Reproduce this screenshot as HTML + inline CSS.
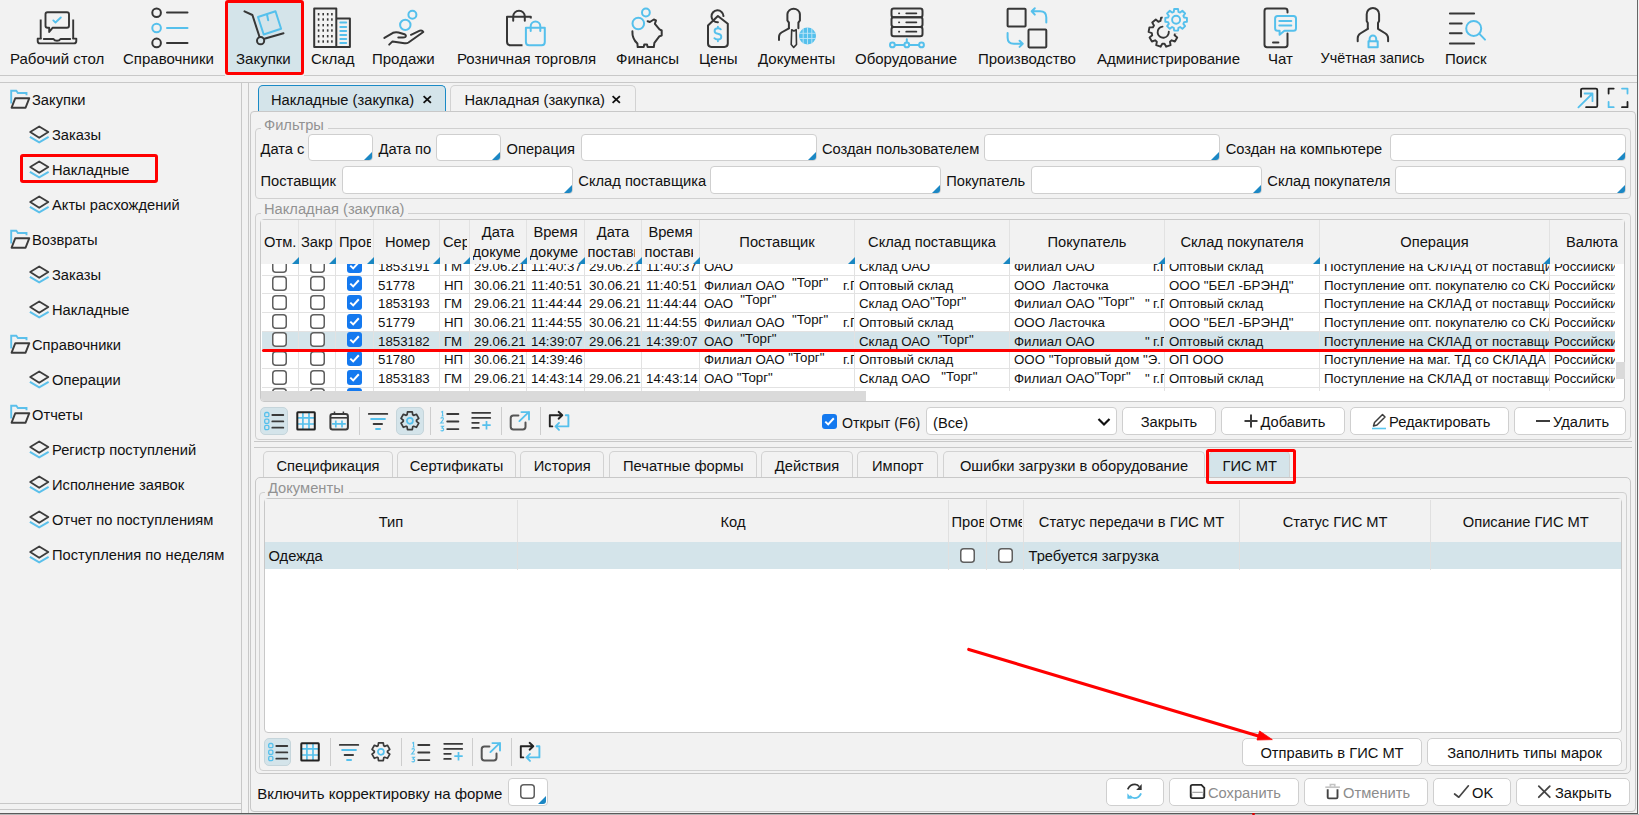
<!DOCTYPE html>
<html><head><meta charset="utf-8">
<style>
*{box-sizing:border-box}
html,body{margin:0;padding:0}
body{width:1639px;height:815px;background:#f2f2f2;position:relative;overflow:hidden;font-family:"Liberation Sans",sans-serif;font-size:14.7px;color:#111}
.a{position:absolute}
.t{position:absolute;white-space:pre;line-height:17px}
.hl{position:absolute;height:1px;background:#c8c8c8}
.vl{position:absolute;width:1px;background:#c8c8c8}
.ic{position:absolute;overflow:visible}
.g{color:#929292}
.cl{overflow:hidden}
</style></head><body>
<!-- TOOLBAR -->
<div class="a" style="left:225px;top:0;width:79px;height:75px;background:#d4e4ea;border:3px solid #f00;border-radius:3px"></div>
<div class="hl" style="left:0;top:75px;width:225px"></div>
<div class="hl" style="left:304px;top:75px;width:1333px"></div>
<div class="hl" style="left:0;top:82px;width:1637px"></div>
<div class="vl" style="left:1637px;top:0;height:814px;background:#666"></div>
<div class="hl" style="left:0;top:813px;width:1638px;background:#5a5a5a"></div>
<div class="hl" style="left:0;top:814px;width:1639px;background:#b8b8b8"></div><div class="a" style="left:1252px;top:812.5px;width:3px;height:2.5px;background:#d00;border-radius:1px"></div>

<div class="t" style="font-size:15px;left:10px;top:50px">Рабочий стол</div>
<div class="t" style="font-size:15px;left:123px;top:50px">Справочники</div>
<div class="t" style="font-size:15px;left:236px;top:50px">Закупки</div>
<div class="t" style="font-size:15px;left:311px;top:50px">Склад</div>
<div class="t" style="font-size:15px;left:372px;top:50px">Продажи</div>
<div class="t" style="font-size:15px;left:457px;top:50px">Розничная торговля</div>
<div class="t" style="font-size:15px;left:616px;top:50px">Финансы</div>
<div class="t" style="font-size:15px;left:699px;top:50px">Цены</div>
<div class="t" style="font-size:15px;left:758px;top:50px">Документы</div>
<div class="t" style="font-size:15px;left:855px;top:50px">Оборудование</div>
<div class="t" style="font-size:15px;left:978px;top:50px">Производство</div>
<div class="t" style="font-size:15px;left:1097px;top:50px">Администрирование</div>
<div class="t" style="font-size:15px;left:1268px;top:50px">Чат</div>
<div class="t" style="font-size:14.4px;left:1320.5px;top:50.4px">Учётная запись</div>
<div class="t" style="font-size:15px;left:1445px;top:50px">Поиск</div>


<svg class="ic" style="left:30px;top:4px" width="60" height="46" viewBox="0 0 60 46" fill="none" stroke-width="2" stroke-linecap="round" stroke-linejoin="round"><path d="M10.7 15.5V34.3M43.2 15.5V34.3" stroke="#363636" stroke-width="1.9" stroke-linecap="butt"/>
<path d="M8 34.6H11M43 34.6H46.3V37Q46.3 39.4 44 39.4H10Q7.7 39.4 7.7 37V34.6" stroke="#363636" stroke-width="1.9"/>
<path d="M13.8 35H23.5Q24.5 36.8 27 36.8Q29.5 36.8 30.5 35H40.2" stroke="#363636" stroke-width="1.9"/>
<path d="M17.5 8.3H37Q39 8.3 39 10.3V21.8Q39 23.8 37 23.8H22.5L19.2 28V23.8H17.5Q15.5 23.8 15.5 21.8V10.3Q15.5 8.3 17.5 8.3Z" stroke="#363636" stroke-width="1.9"/>
<path d="M23.3 16.4L25.5 18.5L30.8 13.5" stroke="#55c0ec" stroke-width="1.9"/></svg>
<svg class="ic" style="left:140px;top:4px" width="60" height="46" viewBox="0 0 60 46" fill="none" stroke-width="2" stroke-linecap="round" stroke-linejoin="round"><circle cx="16.6" cy="8.7" r="4.3" stroke="#363636"/><circle cx="16.6" cy="24" r="4.3" stroke="#55c0ec"/><circle cx="16.6" cy="38.9" r="4.3" stroke="#363636"/>
<path d="M27 8.6H47.5M27 38.9H47.5" stroke="#363636"/><path d="M27 24H47.5" stroke="#55c0ec"/></svg>
<svg class="ic" style="left:236px;top:4px" width="60" height="46" viewBox="0 0 60 46" fill="none" stroke-width="2" stroke-linecap="round" stroke-linejoin="round"><path d="M8.5 7.3L16.4 11L23.5 32.8" stroke="#363636"/><circle cx="24.6" cy="36.7" r="3.6" stroke="#363636"/><path d="M28.4 34.8L47.5 29.2" stroke="#363636"/>
<path d="M22 13L39.5 7.3L45.1 24.8L27.7 30.5Z" stroke="#55c0ec" stroke-linecap="butt"/><path d="M31 10.5L32.2 16.2" stroke="#55c0ec"/></svg>
<svg class="ic" style="left:302px;top:4px" width="60" height="46" viewBox="0 0 60 46" fill="none" stroke-width="2" stroke-linecap="round" stroke-linejoin="round"><path d="M12.2 4.6H34.3V43.1H12.2Z" stroke="#363636" stroke-linecap="butt"/><path d="M34.3 14.5H47.9V43.1H34.3" stroke="#363636" stroke-linecap="butt"/><rect x="15.8" y="9.0" width="1.6" height="2.4" fill="#363636" stroke="none"/><rect x="15.8" y="14.3" width="1.6" height="2.4" fill="#363636" stroke="none"/><rect x="15.8" y="20.0" width="1.6" height="2.4" fill="#363636" stroke="none"/><rect x="15.8" y="25.3" width="1.6" height="2.4" fill="#363636" stroke="none"/><rect x="15.8" y="31.000000000000004" width="1.6" height="2.4" fill="#363636" stroke="none"/><rect x="15.8" y="36.3" width="1.6" height="2.4" fill="#363636" stroke="none"/><rect x="20.4" y="9.0" width="1.6" height="2.4" fill="#363636" stroke="none"/><rect x="20.4" y="14.3" width="1.6" height="2.4" fill="#363636" stroke="none"/><rect x="20.4" y="20.0" width="1.6" height="2.4" fill="#363636" stroke="none"/><rect x="20.4" y="25.3" width="1.6" height="2.4" fill="#363636" stroke="none"/><rect x="20.4" y="31.000000000000004" width="1.6" height="2.4" fill="#363636" stroke="none"/><rect x="20.4" y="36.3" width="1.6" height="2.4" fill="#363636" stroke="none"/><rect x="24.9" y="9.0" width="1.6" height="2.4" fill="#363636" stroke="none"/><rect x="24.9" y="14.3" width="1.6" height="2.4" fill="#363636" stroke="none"/><rect x="24.9" y="20.0" width="1.6" height="2.4" fill="#363636" stroke="none"/><rect x="24.9" y="25.3" width="1.6" height="2.4" fill="#363636" stroke="none"/><rect x="24.9" y="31.000000000000004" width="1.6" height="2.4" fill="#363636" stroke="none"/><rect x="24.9" y="36.3" width="1.6" height="2.4" fill="#363636" stroke="none"/><rect x="29.099999999999998" y="9.0" width="1.6" height="2.4" fill="#363636" stroke="none"/><rect x="29.099999999999998" y="14.3" width="1.6" height="2.4" fill="#363636" stroke="none"/><rect x="29.099999999999998" y="20.0" width="1.6" height="2.4" fill="#363636" stroke="none"/><rect x="29.099999999999998" y="25.3" width="1.6" height="2.4" fill="#363636" stroke="none"/><rect x="29.099999999999998" y="31.000000000000004" width="1.6" height="2.4" fill="#363636" stroke="none"/><rect x="29.099999999999998" y="36.3" width="1.6" height="2.4" fill="#363636" stroke="none"/>
<path d="M38.3 18.6H44.2M38.3 22.9H44.2M38.3 27H44.2M38.3 30.9H44.2M38.3 35H44.2M38.3 38.9H44.2" stroke="#55c0ec"/></svg>
<svg class="ic" style="left:374px;top:4px" width="60" height="46" viewBox="0 0 60 46" fill="none" stroke-width="2" stroke-linecap="round" stroke-linejoin="round"><circle cx="31.3" cy="20.9" r="5.2" stroke="#55c0ec"/><circle cx="38.4" cy="10.7" r="4" stroke="#55c0ec"/>
<path d="M10.4 33.9L19 28.8Q21.5 27.8 24.5 28.5L30.5 30.2Q32.8 31.5 31.3 33Q30.5 33.6 29 33.6H24.3" stroke="#363636"/>
<path d="M37 30.8L45.8 26.6Q48.3 25.9 49.3 28L34.5 38.5Q33 39.5 30.5 39.2L18.5 37.4L15.2 40.6" stroke="#363636"/></svg>
<svg class="ic" style="left:496px;top:4px" width="60" height="46" viewBox="0 0 60 46" fill="none" stroke-width="2" stroke-linecap="round" stroke-linejoin="round"><path d="M26.5 41.2H14.5Q11 41.2 11 37.7V12.7H34.8V14.6" stroke="#363636" stroke-linecap="butt"/><path d="M17.2 16.8V12.5A5.8 5.8 0 0 1 28.8 12.5V16.8" stroke="#363636"/>
<path d="M29.9 23.7H48.8V38Q48.8 41.2 45.6 41.2H33.1Q29.9 41.2 29.9 38Z" stroke="#55c0ec" stroke-linecap="butt"/><path d="M34.7 27V22.3A4.8 4.8 0 0 1 44.3 22.3V27" stroke="#55c0ec"/></svg>
<svg class="ic" style="left:616px;top:4px" width="60" height="46" viewBox="0 0 60 46" fill="none" stroke-width="2" stroke-linecap="round" stroke-linejoin="round"><circle cx="22.3" cy="19.5" r="5.8" stroke="#55c0ec"/><circle cx="29.9" cy="8.5" r="3.9" stroke="#55c0ec"/>
<path d="M16.4 27.2Q16 34.5 21.4 39.5L21.7 43.1H27.7L28.2 40.6H31L31.6 43.1H37.8L38.4 38.9L43.5 32.2L45.7 31.6V26.5L43.5 25.4L38.9 19.8L40 16.4L37.8 15.5L33.9 18L31.6 17.2" stroke="#363636"/></svg>
<svg class="ic" style="left:688px;top:4px" width="60" height="46" viewBox="0 0 60 46" fill="none" stroke-width="2" stroke-linecap="round" stroke-linejoin="round"><path d="M20 21.5L29.9 12L39.8 19.8V39.5Q39.8 42.9 36.4 42.9H23.4Q20 42.9 20 39.5Z" stroke="#363636"/>
<path d="M35.5 12.1A6 6 0 1 0 29.9 18.3" stroke="#363636"/>
<path d="M32.8 25.3Q31.8 24.2 29.9 24.2Q26.6 24.2 26.6 27Q26.6 29.3 29.9 29.8Q33.3 30.3 33.3 32.7Q33.3 35.5 29.9 35.5Q27.5 35.5 26.4 34.2M29.9 22.6V24.2M29.9 35.5V37.2" stroke="#55c0ec" stroke-width="1.9"/></svg>
<svg class="ic" style="left:766px;top:4px" width="60" height="46" viewBox="0 0 60 46" fill="none" stroke-width="2" stroke-linecap="round" stroke-linejoin="round"><path d="M22.9 24.3V18.6L21.4 16.4V10.2A6.3 6.3 0 0 1 33.9 10.2V16.4L32.4 18.6V24.3" stroke="#363636"/><path d="M22.9 24.3L15.5 28.5Q13 30 13 33V36.1" stroke="#363636"/>
<path d="M25.7 25.7L27.9 27L30.2 25.7L30.5 40.5L27.7 43.4L25.2 40.5Z" stroke="#363636" stroke-width="1.6"/>
<circle cx="41.5" cy="31.9" r="8.5" fill="#55c0ec" stroke="none"/><path d="M33.5 29.3H49.5M33.5 34.5H49.5M37.2 24.5V39.5M41.5 23.5V40.5M45.8 24.5V39.5" stroke="#bfe6f7" stroke-width="0.9"/></svg>
<svg class="ic" style="left:878px;top:4px" width="60" height="46" viewBox="0 0 60 46" fill="none" stroke-width="2" stroke-linecap="round" stroke-linejoin="round"><rect x="13.5" y="4.6" width="31" height="8.7" rx="2.3" stroke="#363636"/><rect x="13.5" y="13.3" width="31" height="9.6" rx="2.3" stroke="#363636"/><rect x="13.5" y="22.9" width="31" height="9.3" rx="2.3" stroke="#363636"/>
<path d="M20.9 9.3H21.3M20.9 18.3H21.3M20.9 27.7H21.3M28.2 9.3H38.4M28.2 18.3H38.4M28.2 27.7H38.4" stroke="#363636" stroke-width="1.7"/>
<path d="M28.8 35.3V38.4M16.9 40.9H26.3M31.3 40.9H41" stroke="#55c0ec"/><circle cx="14.4" cy="40.9" r="2.4" stroke="#55c0ec"/><circle cx="28.8" cy="40.9" r="2.4" stroke="#55c0ec"/><circle cx="43.5" cy="40.9" r="2.4" stroke="#55c0ec"/></svg>
<svg class="ic" style="left:997px;top:4px" width="60" height="46" viewBox="0 0 60 46" fill="none" stroke-width="2" stroke-linecap="round" stroke-linejoin="round"><rect x="10.6" y="4.7" width="18" height="17.8" rx="0.8" stroke="#363636"/><rect x="31.5" y="25.6" width="17.8" height="17.8" rx="0.8" stroke="#363636"/>
<path d="M49.3 18.6V13.5Q49.3 7.3 43 7.3H34.9M37.8 4.3L34.7 7.3L37.8 10.6" stroke="#55c0ec"/>
<path d="M10.6 29.1V33.5Q10.6 39.8 16.9 39.8H25.5M22.6 36.7L25.7 39.8L22.6 42.9" stroke="#55c0ec"/></svg>
<svg class="ic" style="left:1138px;top:4px" width="60" height="46" viewBox="0 0 60 46" fill="none" stroke-width="2" stroke-linecap="round" stroke-linejoin="round"><defs><clipPath id="gc"><path d="M0 0H60V46H0Z M38.1 2.5A13.6 13.6 0 1 0 38.11 2.5Z" clip-rule="evenodd"/></clipPath></defs>
<path d="M22.52 16.96L23.08 13.58L27.72 13.58L28.28 16.96L30.41 17.74L33.02 15.51L36.57 18.49L34.83 21.45L35.96 23.41L39.39 23.38L40.20 27.94L36.97 29.09L36.57 31.32L39.22 33.50L36.90 37.51L33.69 36.32L31.95 37.77L32.58 41.14L28.22 42.73L26.53 39.74L24.27 39.74L22.58 42.73L18.22 41.14L18.85 37.77L17.11 36.32L13.90 37.51L11.58 33.50L14.23 31.32L13.83 29.09L10.60 27.94L11.41 23.38L14.84 23.41L15.97 21.45L14.23 18.49L17.78 15.51L20.39 17.74Z" stroke="#363636" stroke-width="1.9" clip-path="url(#gc)"/><path d="M30.8 27.7A5.6 5.6 0 1 1 24.5 22.6" stroke="#363636" stroke-width="1.9"/>
<path d="M35.78 7.83L36.17 4.97L40.03 4.97L40.42 7.83L42.10 8.53L44.39 6.78L47.12 9.51L45.37 11.80L46.07 13.48L48.93 13.87L48.93 17.73L46.07 18.12L45.37 19.80L47.12 22.09L44.39 24.82L42.10 23.07L40.42 23.77L40.03 26.63L36.17 26.63L35.78 23.77L34.10 23.07L31.81 24.82L29.08 22.09L30.83 19.80L30.13 18.12L27.27 17.73L27.27 13.87L30.13 13.48L30.83 11.80L29.08 9.51L31.81 6.78L34.10 8.53Z" stroke="#55c0ec" stroke-width="1.9"/><circle cx="38.1" cy="15.8" r="4" stroke="#55c0ec" stroke-width="1.9"/></svg>
<svg class="ic" style="left:1250px;top:4px" width="60" height="46" viewBox="0 0 60 46" fill="none" stroke-width="2" stroke-linecap="round" stroke-linejoin="round"><path d="M37.5 8.5V7Q37.5 4.6 35 4.6H17Q14.5 4.6 14.5 7V40.8Q14.5 43.2 17 43.2H35Q37.5 43.2 37.5 40.8V29.5" stroke="#363636"/><path d="M23 38.4H28.4" stroke="#363636"/>
<path d="M27.6 11.9H43.5Q46 11.9 46 14.4V24.3Q46 26.8 43.5 26.8H34.4L29.6 30.8V26.8H27.6Q25.1 26.8 25.1 24.3V14.4Q25.1 11.9 27.6 11.9Z" stroke="#55c0ec"/>
<path d="M29.3 16.9H41.3M29.3 21.4H41.3" stroke="#55c0ec"/></svg>
<svg class="ic" style="left:1343px;top:4px" width="60" height="46" viewBox="0 0 60 46" fill="none" stroke-width="2" stroke-linecap="round" stroke-linejoin="round"><path d="M24.8 24.8V18.9L23.7 16.9V10.2A6.2 6.2 0 0 1 36.1 10.2V16.9L35 18.9V24.8L42.5 29.5Q45.1 31.2 45.1 34.2V37.2" stroke="#363636"/><path d="M24.8 24.8L17.3 29.5Q14.7 31.2 14.7 34.2V37.2" stroke="#363636"/>
<rect x="25.5" y="37.3" width="9.2" height="5.9" stroke="#55c0ec" stroke-linecap="butt"/><path d="M26.6 37.2V34.8A3.3 3.3 0 0 1 33.2 34.8V37.2" stroke="#55c0ec"/></svg>
<svg class="ic" style="left:1437px;top:4px" width="60" height="46" viewBox="0 0 60 46" fill="none" stroke-width="2" stroke-linecap="round" stroke-linejoin="round"><path d="M12.9 9.6H37.1M12.9 39.5H37.1M12.9 19.5H24.7M12.9 29.3H24.7" stroke="#363636"/>
<circle cx="36.7" cy="24.4" r="7.5" stroke="#55c0ec"/><path d="M42.2 29.6L48 35.6" stroke="#55c0ec"/></svg>
<!-- LEFT PANEL -->
<div class="vl" style="left:241px;top:83px;height:730px"></div>
<div class="vl" style="left:248px;top:83px;height:730px"></div>
<div class="hl" style="left:0;top:803px;width:241px"></div>
<div class="hl" style="left:0;top:809px;width:241px"></div>
<div class="a" style="left:20px;top:154px;width:138px;height:29px;border:3px solid #f00;border-radius:3px"></div>

<svg class="ic" style="left:10px;top:89px" width="22" height="21" viewBox="0 0 22 21"><path d="M1.2 14.5V1.8H6.3L7.9 4H16.5V6.2" fill="none" stroke="#5bc0eb" stroke-width="1.9"/><path d="M5.3 9.2H19.3L15.6 18.7H1.6Z" fill="none" stroke="#3c3c3c" stroke-width="1.9" stroke-linejoin="round"/></svg>
<div class="t" style="left:32px;top:91.5px">Закупки</div>
<svg class="ic" style="left:29px;top:125px" width="22" height="19" viewBox="0 0 22 19"><path d="M1.2 7L10.2 1.5L19.3 7L10.2 12.8Z" fill="none" stroke="#3c3c3c" stroke-width="1.8" stroke-linejoin="round"/><path d="M0.9 11.9L10.2 17.3L19.6 11.9" fill="none" stroke="#5bc0eb" stroke-width="2"/></svg>
<div class="t" style="left:52px;top:126.5px">Заказы</div>
<svg class="ic" style="left:29px;top:160px" width="22" height="19" viewBox="0 0 22 19"><path d="M1.2 7L10.2 1.5L19.3 7L10.2 12.8Z" fill="none" stroke="#3c3c3c" stroke-width="1.8" stroke-linejoin="round"/><path d="M0.9 11.9L10.2 17.3L19.6 11.9" fill="none" stroke="#5bc0eb" stroke-width="2"/></svg>
<div class="t" style="left:52px;top:161.5px">Накладные</div>
<svg class="ic" style="left:29px;top:195px" width="22" height="19" viewBox="0 0 22 19"><path d="M1.2 7L10.2 1.5L19.3 7L10.2 12.8Z" fill="none" stroke="#3c3c3c" stroke-width="1.8" stroke-linejoin="round"/><path d="M0.9 11.9L10.2 17.3L19.6 11.9" fill="none" stroke="#5bc0eb" stroke-width="2"/></svg>
<div class="t" style="left:52px;top:196.5px">Акты расхождений</div>
<svg class="ic" style="left:10px;top:229px" width="22" height="21" viewBox="0 0 22 21"><path d="M1.2 14.5V1.8H6.3L7.9 4H16.5V6.2" fill="none" stroke="#5bc0eb" stroke-width="1.9"/><path d="M5.3 9.2H19.3L15.6 18.7H1.6Z" fill="none" stroke="#3c3c3c" stroke-width="1.9" stroke-linejoin="round"/></svg>
<div class="t" style="left:32px;top:231.5px">Возвраты</div>
<svg class="ic" style="left:29px;top:265px" width="22" height="19" viewBox="0 0 22 19"><path d="M1.2 7L10.2 1.5L19.3 7L10.2 12.8Z" fill="none" stroke="#3c3c3c" stroke-width="1.8" stroke-linejoin="round"/><path d="M0.9 11.9L10.2 17.3L19.6 11.9" fill="none" stroke="#5bc0eb" stroke-width="2"/></svg>
<div class="t" style="left:52px;top:266.5px">Заказы</div>
<svg class="ic" style="left:29px;top:300px" width="22" height="19" viewBox="0 0 22 19"><path d="M1.2 7L10.2 1.5L19.3 7L10.2 12.8Z" fill="none" stroke="#3c3c3c" stroke-width="1.8" stroke-linejoin="round"/><path d="M0.9 11.9L10.2 17.3L19.6 11.9" fill="none" stroke="#5bc0eb" stroke-width="2"/></svg>
<div class="t" style="left:52px;top:301.5px">Накладные</div>
<svg class="ic" style="left:10px;top:334px" width="22" height="21" viewBox="0 0 22 21"><path d="M1.2 14.5V1.8H6.3L7.9 4H16.5V6.2" fill="none" stroke="#5bc0eb" stroke-width="1.9"/><path d="M5.3 9.2H19.3L15.6 18.7H1.6Z" fill="none" stroke="#3c3c3c" stroke-width="1.9" stroke-linejoin="round"/></svg>
<div class="t" style="left:32px;top:336.5px">Справочники</div>
<svg class="ic" style="left:29px;top:370px" width="22" height="19" viewBox="0 0 22 19"><path d="M1.2 7L10.2 1.5L19.3 7L10.2 12.8Z" fill="none" stroke="#3c3c3c" stroke-width="1.8" stroke-linejoin="round"/><path d="M0.9 11.9L10.2 17.3L19.6 11.9" fill="none" stroke="#5bc0eb" stroke-width="2"/></svg>
<div class="t" style="left:52px;top:371.5px">Операции</div>
<svg class="ic" style="left:10px;top:404px" width="22" height="21" viewBox="0 0 22 21"><path d="M1.2 14.5V1.8H6.3L7.9 4H16.5V6.2" fill="none" stroke="#5bc0eb" stroke-width="1.9"/><path d="M5.3 9.2H19.3L15.6 18.7H1.6Z" fill="none" stroke="#3c3c3c" stroke-width="1.9" stroke-linejoin="round"/></svg>
<div class="t" style="left:32px;top:406.5px">Отчеты</div>
<svg class="ic" style="left:29px;top:440px" width="22" height="19" viewBox="0 0 22 19"><path d="M1.2 7L10.2 1.5L19.3 7L10.2 12.8Z" fill="none" stroke="#3c3c3c" stroke-width="1.8" stroke-linejoin="round"/><path d="M0.9 11.9L10.2 17.3L19.6 11.9" fill="none" stroke="#5bc0eb" stroke-width="2"/></svg>
<div class="t" style="left:52px;top:441.5px">Регистр поступлений</div>
<svg class="ic" style="left:29px;top:475px" width="22" height="19" viewBox="0 0 22 19"><path d="M1.2 7L10.2 1.5L19.3 7L10.2 12.8Z" fill="none" stroke="#3c3c3c" stroke-width="1.8" stroke-linejoin="round"/><path d="M0.9 11.9L10.2 17.3L19.6 11.9" fill="none" stroke="#5bc0eb" stroke-width="2"/></svg>
<div class="t" style="left:52px;top:476.5px">Исполнение заявок</div>
<svg class="ic" style="left:29px;top:510px" width="22" height="19" viewBox="0 0 22 19"><path d="M1.2 7L10.2 1.5L19.3 7L10.2 12.8Z" fill="none" stroke="#3c3c3c" stroke-width="1.8" stroke-linejoin="round"/><path d="M0.9 11.9L10.2 17.3L19.6 11.9" fill="none" stroke="#5bc0eb" stroke-width="2"/></svg>
<div class="t" style="left:52px;top:511.5px">Отчет по поступлениям</div>
<svg class="ic" style="left:29px;top:545px" width="22" height="19" viewBox="0 0 22 19"><path d="M1.2 7L10.2 1.5L19.3 7L10.2 12.8Z" fill="none" stroke="#3c3c3c" stroke-width="1.8" stroke-linejoin="round"/><path d="M0.9 11.9L10.2 17.3L19.6 11.9" fill="none" stroke="#5bc0eb" stroke-width="2"/></svg>
<div class="t" style="left:52px;top:546.5px">Поступления по неделям</div>


<div class="a" style="left:258px;top:85px;width:188px;height:26.5px;background:#d4e4ea;border:1.5px solid #1a8ac6;border-bottom:none;border-radius:5px 5px 0 0"></div>
<div class="t " style="left:271px;top:91.7px;">Накладные (закупка)</div>
<svg class="ic" style="left:420px;top:93px" width="14" height="14" fill="none"><path d="M3.6 3.1L10.9 9.8M10.9 3.1L3.6 9.8" stroke="#111" stroke-width="1.8"/></svg>
<div class="a" style="left:450px;top:85px;width:186px;height:26px;border:1px solid #d2d2d2;border-bottom:none;border-radius:5px 5px 0 0"></div>
<div class="t " style="left:464.5px;top:91.7px;">Накладная (закупка)</div>
<svg class="ic" style="left:609px;top:93px" width="14" height="14" fill="none"><path d="M3.6 3.1L10.9 9.8M10.9 3.1L3.6 9.8" stroke="#111" stroke-width="1.8"/></svg>
<div class="a" style="left:250px;top:111px;width:1386px;height:701px;border:1px solid #c8c8c8;border-radius:4px"></div>
<svg class="ic" style="left:1572px;top:84px" width="60" height="28" viewBox="0 0 60 28" fill="none" stroke-width="1.8" stroke-linecap="round" stroke-linejoin="round"><path d="M9 12.8V6Q9 4.6 10.4 4.6H23.9Q25.3 4.6 25.3 6V21.8Q25.3 23.2 23.9 23.2H14.1" stroke="#222"/><path d="M6.4 23.4L20.5 9.5M12.6 9.5H20.5V17.2" stroke="#55c0ec"/><path d="M36.6 9.5V4.6H41.7M55.5 17.9V23.2H50" stroke="#222"/><path d="M50 4.6H55.5V9.5M36.6 17.9V23.2H41.7" stroke="#55c0ec"/></svg>
<div class="a" style="left:255px;top:128px;width:1376px;height:71px;border:1px solid #d0d0d0;border-radius:4px"></div>
<div class="a" style="left:261px;top:126px;width:67px;height:5px;background:#f2f2f2"></div>
<div class="t g" style="left:264px;top:116.6px;">Фильтры</div>
<div class="t " style="left:260.5px;top:140.9px;">Дата с</div>
<div class="a" style="left:308px;top:134px;width:65px;height:27px;background:#fff;border:1px solid #cfcfcf;border-radius:4px"></div>
<svg class="ic" style="left:364px;top:152px" width="8" height="8"><path d="M8 0V5Q8 8 5 8H0Z" fill="#1b87c4"/></svg>
<div class="t " style="left:378.5px;top:140.9px;">Дата по</div>
<div class="a" style="left:436px;top:134px;width:65px;height:27px;background:#fff;border:1px solid #cfcfcf;border-radius:4px"></div>
<svg class="ic" style="left:492px;top:152px" width="8" height="8"><path d="M8 0V5Q8 8 5 8H0Z" fill="#1b87c4"/></svg>
<div class="t " style="left:506.5px;top:140.9px;">Операция</div>
<div class="a" style="left:581px;top:134px;width:236px;height:27px;background:#fff;border:1px solid #cfcfcf;border-radius:4px"></div>
<svg class="ic" style="left:808px;top:152px" width="8" height="8"><path d="M8 0V5Q8 8 5 8H0Z" fill="#1b87c4"/></svg>
<div class="t " style="left:822px;top:140.9px;">Создан пользователем</div>
<div class="a" style="left:984px;top:134px;width:236px;height:27px;background:#fff;border:1px solid #cfcfcf;border-radius:4px"></div>
<svg class="ic" style="left:1211px;top:152px" width="8" height="8"><path d="M8 0V5Q8 8 5 8H0Z" fill="#1b87c4"/></svg>
<div class="t " style="left:1225.7px;top:140.9px;">Создан на компьютере</div>
<div class="a" style="left:1390px;top:134px;width:236px;height:27px;background:#fff;border:1px solid #cfcfcf;border-radius:4px"></div>
<svg class="ic" style="left:1617px;top:152px" width="8" height="8"><path d="M8 0V5Q8 8 5 8H0Z" fill="#1b87c4"/></svg>
<div class="t " style="left:260.5px;top:172.9px;">Поставщик</div>
<div class="a" style="left:342px;top:166px;width:231px;height:28px;background:#fff;border:1px solid #cfcfcf;border-radius:4px"></div>
<svg class="ic" style="left:564px;top:185px" width="8" height="8"><path d="M8 0V5Q8 8 5 8H0Z" fill="#1b87c4"/></svg>
<div class="t " style="left:578.3px;top:172.9px;">Склад поставщика</div>
<div class="a" style="left:710px;top:166px;width:231px;height:28px;background:#fff;border:1px solid #cfcfcf;border-radius:4px"></div>
<svg class="ic" style="left:932px;top:185px" width="8" height="8"><path d="M8 0V5Q8 8 5 8H0Z" fill="#1b87c4"/></svg>
<div class="t " style="left:946.2px;top:172.9px;">Покупатель</div>
<div class="a" style="left:1031px;top:166px;width:231px;height:28px;background:#fff;border:1px solid #cfcfcf;border-radius:4px"></div>
<svg class="ic" style="left:1253px;top:185px" width="8" height="8"><path d="M8 0V5Q8 8 5 8H0Z" fill="#1b87c4"/></svg>
<div class="t " style="left:1267.3px;top:172.9px;">Склад покупателя</div>
<div class="a" style="left:1395px;top:166px;width:231px;height:28px;background:#fff;border:1px solid #cfcfcf;border-radius:4px"></div>
<svg class="ic" style="left:1617px;top:185px" width="8" height="8"><path d="M8 0V5Q8 8 5 8H0Z" fill="#1b87c4"/></svg>
<div class="a" style="left:255px;top:213px;width:1376px;height:227px;border:1px solid #d0d0d0;border-radius:4px"></div>
<div class="a" style="left:261px;top:211px;width:147px;height:5px;background:#f2f2f2"></div>
<div class="t g" style="left:264px;top:200.9px;">Накладная (закупка)</div>
<div class="a" style="left:260px;top:219px;width:1365px;height:183px;background:#fff;border:1px solid #c8c8c8;border-radius:4px;overflow:hidden"></div>
<div class="a" style="left:261px;top:220px;width:1363px;height:43.5px;background:#f2f2f2"></div>
<div class="a" style="left:261.5px;top:331px;width:1353.5px;height:19px;background:#d4e4ea"></div>
<div class="vl" style="left:298px;top:220px;height:171px;background:#e2e2e2"></div>
<div class="vl" style="left:335px;top:220px;height:171px;background:#e2e2e2"></div>
<div class="vl" style="left:373px;top:220px;height:171px;background:#e2e2e2"></div>
<div class="vl" style="left:439px;top:220px;height:171px;background:#e2e2e2"></div>
<div class="vl" style="left:469px;top:220px;height:171px;background:#e2e2e2"></div>
<div class="vl" style="left:526px;top:220px;height:171px;background:#e2e2e2"></div>
<div class="vl" style="left:584px;top:220px;height:171px;background:#e2e2e2"></div>
<div class="vl" style="left:641px;top:220px;height:171px;background:#e2e2e2"></div>
<div class="vl" style="left:699px;top:220px;height:171px;background:#e2e2e2"></div>
<div class="vl" style="left:854px;top:220px;height:171px;background:#e2e2e2"></div>
<div class="vl" style="left:1009px;top:220px;height:171px;background:#e2e2e2"></div>
<div class="vl" style="left:1164px;top:220px;height:171px;background:#e2e2e2"></div>
<div class="vl" style="left:1319px;top:220px;height:171px;background:#e2e2e2"></div>
<div class="vl" style="left:1549px;top:220px;height:171px;background:#e2e2e2"></div>
<div class="hl" style="left:261.5px;top:275px;width:1353.5px;background:#e2e2e2"></div>
<div class="hl" style="left:261.5px;top:293px;width:1353.5px;background:#e2e2e2"></div>
<div class="hl" style="left:261.5px;top:312px;width:1353.5px;background:#e2e2e2"></div>
<div class="hl" style="left:261.5px;top:331px;width:1353.5px;background:#e2e2e2"></div>
<div class="hl" style="left:261.5px;top:349px;width:1353.5px;background:#e2e2e2"></div>
<div class="hl" style="left:261.5px;top:368px;width:1353.5px;background:#e2e2e2"></div>
<div class="hl" style="left:261.5px;top:387px;width:1353.5px;background:#e2e2e2"></div>
<svg class="ic" style="left:291.5px;top:256.5px" width="7" height="7"><path d="M7 0V7H0Z" fill="#1a87c2"/></svg>
<svg class="ic" style="left:328.5px;top:256.5px" width="7" height="7"><path d="M7 0V7H0Z" fill="#1a87c2"/></svg>
<svg class="ic" style="left:366.5px;top:256.5px" width="7" height="7"><path d="M7 0V7H0Z" fill="#1a87c2"/></svg>
<svg class="ic" style="left:432.5px;top:256.5px" width="7" height="7"><path d="M7 0V7H0Z" fill="#1a87c2"/></svg>
<svg class="ic" style="left:462.5px;top:256.5px" width="7" height="7"><path d="M7 0V7H0Z" fill="#1a87c2"/></svg>
<svg class="ic" style="left:519.5px;top:256.5px" width="7" height="7"><path d="M7 0V7H0Z" fill="#1a87c2"/></svg>
<svg class="ic" style="left:577.5px;top:256.5px" width="7" height="7"><path d="M7 0V7H0Z" fill="#1a87c2"/></svg>
<svg class="ic" style="left:634.5px;top:256.5px" width="7" height="7"><path d="M7 0V7H0Z" fill="#1a87c2"/></svg>
<svg class="ic" style="left:692.5px;top:256.5px" width="7" height="7"><path d="M7 0V7H0Z" fill="#1a87c2"/></svg>
<svg class="ic" style="left:847.5px;top:256.5px" width="7" height="7"><path d="M7 0V7H0Z" fill="#1a87c2"/></svg>
<svg class="ic" style="left:1002.5px;top:256.5px" width="7" height="7"><path d="M7 0V7H0Z" fill="#1a87c2"/></svg>
<svg class="ic" style="left:1157.5px;top:256.5px" width="7" height="7"><path d="M7 0V7H0Z" fill="#1a87c2"/></svg>
<svg class="ic" style="left:1312.5px;top:256.5px" width="7" height="7"><path d="M7 0V7H0Z" fill="#1a87c2"/></svg>
<svg class="ic" style="left:1542.5px;top:256.5px" width="7" height="7"><path d="M7 0V7H0Z" fill="#1a87c2"/></svg>
<div class="t cl" style="left:264px;width:33px;top:233.9px;text-align:left">Отм.</div>
<div class="t cl" style="left:301px;width:33.5px;top:233.9px;text-align:left">Закр</div>
<div class="t cl" style="left:339px;width:32px;top:233.9px">Пров</div>
<div class="t cl" style="left:376.5px;width:62.0px;top:233.9px;text-align:center">Номер</div>
<div class="t cl" style="left:443px;width:24px;top:233.9px">Серия</div>
<div class="t" style="left:469.5px;width:57.0px;text-align:center;top:223.7px;">Дата</div>
<div class="t cl" style="left:472.5px;width:47.0px;top:243.7px">документа</div>
<div class="t" style="left:526.5px;width:58.0px;text-align:center;top:223.7px;">Время</div>
<div class="t cl" style="left:529.5px;width:48.0px;top:243.7px">документа</div>
<div class="t" style="left:584.5px;width:57.0px;text-align:center;top:223.7px;">Дата</div>
<div class="t cl" style="left:587.5px;width:47.0px;top:243.7px">поставки</div>
<div class="t" style="left:641.5px;width:58.0px;text-align:center;top:223.7px;">Время</div>
<div class="t cl" style="left:644.5px;width:48.0px;top:243.7px">поставки</div>
<div class="t" style="left:699.5px;width:155.0px;text-align:center;top:233.9px;">Поставщик</div>
<div class="t" style="left:854.5px;width:155.0px;text-align:center;top:233.9px;">Склад поставщика</div>
<div class="t" style="left:1009.5px;width:155.0px;text-align:center;top:233.9px;">Покупатель</div>
<div class="t" style="left:1164.5px;width:155.0px;text-align:center;top:233.9px;">Склад покупателя</div>
<div class="t" style="left:1319.5px;width:230.0px;text-align:center;top:233.9px;">Операция</div>
<div class="t " style="left:1566px;top:233.9px;">Валюта</div>
<div class="a" style="left:261.5px;top:263.5px;width:1353.5px;height:127.5px;overflow:hidden">
<svg class="ic" style="left:10.5px;top:-5.670000000000016px" width="15" height="15" viewBox="0 0 15 15"><rect x="0.75" y="0.75" width="13.5" height="13.5" rx="3" fill="#fff" stroke="#5f5f5f" stroke-width="1.5"/></svg>
<svg class="ic" style="left:48.5px;top:-5.670000000000016px" width="15" height="15" viewBox="0 0 15 15"><rect x="0.75" y="0.75" width="13.5" height="13.5" rx="3" fill="#fff" stroke="#5f5f5f" stroke-width="1.5"/></svg>
<svg class="ic" style="left:85.5px;top:-5.670000000000016px" width="15" height="15" viewBox="0 0 15 15"><rect x="0" y="0" width="15" height="15" rx="3" fill="#1479ef"/><path d="M3.3 7.6L6.2 10.4L11.8 4.3" fill="none" stroke="#fff" stroke-width="2"/></svg>
<div class="t cl" style="left:116.5px;width:61.0px;top:-5.6px;font-size:13.3px">1853191</div>
<div class="t cl" style="left:182.5px;width:25.0px;top:-5.6px;font-size:13.3px">ГМ</div>
<div class="t cl" style="left:212.5px;width:52.0px;top:-5.6px;font-size:13.3px">29.06.21</div>
<div class="t cl" style="left:269.5px;width:53.0px;top:-5.6px;font-size:13.3px">11:40:37</div>
<div class="t cl" style="left:327.5px;width:52.0px;top:-5.6px;font-size:13.3px">29.06.21</div>
<div class="t cl" style="left:384.5px;width:53.0px;top:-5.6px;font-size:13.3px">11:40:37</div>
<div class="t cl" style="left:442.5px;width:150.0px;top:-5.6px;font-size:13.3px">ОАО</div>
<div class="t cl" style="left:597.5px;width:150.0px;top:-5.6px;font-size:13.3px">Склад ОАО</div>
<div class="t cl" style="left:752.5px;width:150.0px;top:-5.6px;font-size:13.3px">Филиал ОАО</div>
<div class="t cl" style="left:907.5px;width:150.0px;top:-5.6px;font-size:13.3px">Оптовый склад</div>
<div class="t cl" style="left:1062.5px;width:225.0px;top:-5.6px;font-size:13.3px">Поступление на СКЛАД от поставщика</div>
<div class="t cl" style="left:1292.5px;width:60.5px;top:-5.6px;font-size:13.3px">Российский рубль</div>
<div class="t" style="left:891.5px;top:-5.6px;width:11px;overflow:hidden;font-size:13.3px">г.Г</div>
<svg class="ic" style="left:10.5px;top:12.996999999999957px" width="15" height="15" viewBox="0 0 15 15"><rect x="0.75" y="0.75" width="13.5" height="13.5" rx="3" fill="#fff" stroke="#5f5f5f" stroke-width="1.5"/></svg>
<svg class="ic" style="left:48.5px;top:12.996999999999957px" width="15" height="15" viewBox="0 0 15 15"><rect x="0.75" y="0.75" width="13.5" height="13.5" rx="3" fill="#fff" stroke="#5f5f5f" stroke-width="1.5"/></svg>
<svg class="ic" style="left:85.5px;top:12.996999999999957px" width="15" height="15" viewBox="0 0 15 15"><rect x="0" y="0" width="15" height="15" rx="3" fill="#1479ef"/><path d="M3.3 7.6L6.2 10.4L11.8 4.3" fill="none" stroke="#fff" stroke-width="2"/></svg>
<div class="t cl" style="left:116.5px;width:61.0px;top:13.1px;font-size:13.3px">51778</div>
<div class="t cl" style="left:182.5px;width:25.0px;top:13.1px;font-size:13.3px">НП</div>
<div class="t cl" style="left:212.5px;width:52.0px;top:13.1px;font-size:13.3px">30.06.21</div>
<div class="t cl" style="left:269.5px;width:53.0px;top:13.1px;font-size:13.3px">11:40:51</div>
<div class="t cl" style="left:327.5px;width:52.0px;top:13.1px;font-size:13.3px">30.06.21</div>
<div class="t cl" style="left:384.5px;width:53.0px;top:13.1px;font-size:13.3px">11:40:51</div>
<div class="t cl" style="left:442.5px;width:150.0px;top:13.1px;font-size:13.3px">Филиал ОАО  <span style="position:relative;top:-3px">"Торг"</span></div>
<div class="t cl" style="left:597.5px;width:150.0px;top:13.1px;font-size:13.3px">Оптовый склад</div>
<div class="t cl" style="left:752.5px;width:150.0px;top:13.1px;font-size:13.3px">ООО  Ласточка</div>
<div class="t cl" style="left:907.5px;width:150.0px;top:13.1px;font-size:13.3px">ООО "БЕЛ -БРЭНД"</div>
<div class="t cl" style="left:1062.5px;width:225.0px;top:13.1px;font-size:13.3px">Поступление опт. покупателю со СКЛАДА</div>
<div class="t cl" style="left:1292.5px;width:60.5px;top:13.1px;font-size:13.3px">Российский рубль</div>
<div class="t" style="left:581.5px;top:13.1px;width:11px;overflow:hidden;font-size:13.3px">г.Г</div>
<svg class="ic" style="left:10.5px;top:31.663999999999987px" width="15" height="15" viewBox="0 0 15 15"><rect x="0.75" y="0.75" width="13.5" height="13.5" rx="3" fill="#fff" stroke="#5f5f5f" stroke-width="1.5"/></svg>
<svg class="ic" style="left:48.5px;top:31.663999999999987px" width="15" height="15" viewBox="0 0 15 15"><rect x="0.75" y="0.75" width="13.5" height="13.5" rx="3" fill="#fff" stroke="#5f5f5f" stroke-width="1.5"/></svg>
<svg class="ic" style="left:85.5px;top:31.663999999999987px" width="15" height="15" viewBox="0 0 15 15"><rect x="0" y="0" width="15" height="15" rx="3" fill="#1479ef"/><path d="M3.3 7.6L6.2 10.4L11.8 4.3" fill="none" stroke="#fff" stroke-width="2"/></svg>
<div class="t cl" style="left:116.5px;width:61.0px;top:31.8px;font-size:13.3px">1853193</div>
<div class="t cl" style="left:182.5px;width:25.0px;top:31.8px;font-size:13.3px">ГМ</div>
<div class="t cl" style="left:212.5px;width:52.0px;top:31.8px;font-size:13.3px">29.06.21</div>
<div class="t cl" style="left:269.5px;width:53.0px;top:31.8px;font-size:13.3px">11:44:44</div>
<div class="t cl" style="left:327.5px;width:52.0px;top:31.8px;font-size:13.3px">29.06.21</div>
<div class="t cl" style="left:384.5px;width:53.0px;top:31.8px;font-size:13.3px">11:44:44</div>
<div class="t cl" style="left:442.5px;width:150.0px;top:31.8px;font-size:13.3px">ОАО  <span style="position:relative;top:-4px">"Торг"</span></div>
<div class="t cl" style="left:597.5px;width:150.0px;top:31.8px;font-size:13.3px">Склад ОАО<span style="position:relative;top:-2px">"Торг"</span></div>
<div class="t cl" style="left:752.5px;width:150.0px;top:31.8px;font-size:13.3px">Филиал ОАО <span style="position:relative;top:-2px">"Торг"</span></div>
<div class="t cl" style="left:907.5px;width:150.0px;top:31.8px;font-size:13.3px">Оптовый склад</div>
<div class="t cl" style="left:1062.5px;width:225.0px;top:31.8px;font-size:13.3px">Поступление на СКЛАД от поставщика</div>
<div class="t cl" style="left:1292.5px;width:60.5px;top:31.8px;font-size:13.3px">Российский рубль</div>
<div class="t" style="left:883.5px;top:31.8px;font-size:13.3px">"</div>
<div class="t" style="left:891.5px;top:31.8px;width:11px;overflow:hidden;font-size:13.3px">г.Г</div>
<svg class="ic" style="left:10.5px;top:50.33100000000002px" width="15" height="15" viewBox="0 0 15 15"><rect x="0.75" y="0.75" width="13.5" height="13.5" rx="3" fill="#fff" stroke="#5f5f5f" stroke-width="1.5"/></svg>
<svg class="ic" style="left:48.5px;top:50.33100000000002px" width="15" height="15" viewBox="0 0 15 15"><rect x="0.75" y="0.75" width="13.5" height="13.5" rx="3" fill="#fff" stroke="#5f5f5f" stroke-width="1.5"/></svg>
<svg class="ic" style="left:85.5px;top:50.33100000000002px" width="15" height="15" viewBox="0 0 15 15"><rect x="0" y="0" width="15" height="15" rx="3" fill="#1479ef"/><path d="M3.3 7.6L6.2 10.4L11.8 4.3" fill="none" stroke="#fff" stroke-width="2"/></svg>
<div class="t cl" style="left:116.5px;width:61.0px;top:50.4px;font-size:13.3px">51779</div>
<div class="t cl" style="left:182.5px;width:25.0px;top:50.4px;font-size:13.3px">НП</div>
<div class="t cl" style="left:212.5px;width:52.0px;top:50.4px;font-size:13.3px">30.06.21</div>
<div class="t cl" style="left:269.5px;width:53.0px;top:50.4px;font-size:13.3px">11:44:55</div>
<div class="t cl" style="left:327.5px;width:52.0px;top:50.4px;font-size:13.3px">30.06.21</div>
<div class="t cl" style="left:384.5px;width:53.0px;top:50.4px;font-size:13.3px">11:44:55</div>
<div class="t cl" style="left:442.5px;width:150.0px;top:50.4px;font-size:13.3px">Филиал ОАО  <span style="position:relative;top:-3px">"Торг"</span></div>
<div class="t cl" style="left:597.5px;width:150.0px;top:50.4px;font-size:13.3px">Оптовый склад</div>
<div class="t cl" style="left:752.5px;width:150.0px;top:50.4px;font-size:13.3px">ООО Ласточка</div>
<div class="t cl" style="left:907.5px;width:150.0px;top:50.4px;font-size:13.3px">ООО "БЕЛ -БРЭНД"</div>
<div class="t cl" style="left:1062.5px;width:225.0px;top:50.4px;font-size:13.3px">Поступление опт. покупателю со СКЛАДА</div>
<div class="t cl" style="left:1292.5px;width:60.5px;top:50.4px;font-size:13.3px">Российский рубль</div>
<div class="t" style="left:581.5px;top:50.4px;width:11px;overflow:hidden;font-size:13.3px">г.Г</div>
<svg class="ic" style="left:10.5px;top:68.99799999999999px" width="15" height="15" viewBox="0 0 15 15"><rect x="0.75" y="0.75" width="13.5" height="13.5" rx="3" fill="#fff" stroke="#5f5f5f" stroke-width="1.5"/></svg>
<svg class="ic" style="left:48.5px;top:68.99799999999999px" width="15" height="15" viewBox="0 0 15 15"><rect x="0.75" y="0.75" width="13.5" height="13.5" rx="3" fill="#fff" stroke="#5f5f5f" stroke-width="1.5"/></svg>
<svg class="ic" style="left:85.5px;top:68.99799999999999px" width="15" height="15" viewBox="0 0 15 15"><rect x="0" y="0" width="15" height="15" rx="3" fill="#1479ef"/><path d="M3.3 7.6L6.2 10.4L11.8 4.3" fill="none" stroke="#fff" stroke-width="2"/></svg>
<div class="t cl" style="left:116.5px;width:61.0px;top:69.1px;font-size:13.3px">1853182</div>
<div class="t cl" style="left:182.5px;width:25.0px;top:69.1px;font-size:13.3px">ГМ</div>
<div class="t cl" style="left:212.5px;width:52.0px;top:69.1px;font-size:13.3px">29.06.21</div>
<div class="t cl" style="left:269.5px;width:53.0px;top:69.1px;font-size:13.3px">14:39:07</div>
<div class="t cl" style="left:327.5px;width:52.0px;top:69.1px;font-size:13.3px">29.06.21</div>
<div class="t cl" style="left:384.5px;width:53.0px;top:69.1px;font-size:13.3px">14:39:07</div>
<div class="t cl" style="left:442.5px;width:150.0px;top:69.1px;font-size:13.3px">ОАО  <span style="position:relative;top:-3px">"Торг"</span></div>
<div class="t cl" style="left:597.5px;width:150.0px;top:69.1px;font-size:13.3px">Склад ОАО  <span style="position:relative;top:-2px">"Торг"</span></div>
<div class="t cl" style="left:752.5px;width:150.0px;top:69.1px;font-size:13.3px">Филиал ОАО</div>
<div class="t cl" style="left:907.5px;width:150.0px;top:69.1px;font-size:13.3px">Оптовый склад</div>
<div class="t cl" style="left:1062.5px;width:225.0px;top:69.1px;font-size:13.3px">Поступление на СКЛАД от поставщика</div>
<div class="t cl" style="left:1292.5px;width:60.5px;top:69.1px;font-size:13.3px">Российский рубль</div>
<div class="t" style="left:883.5px;top:69.1px;font-size:13.3px">"</div>
<div class="t" style="left:891.5px;top:69.1px;width:11px;overflow:hidden;font-size:13.3px">г.Г</div>
<svg class="ic" style="left:10.5px;top:87.66499999999996px" width="15" height="15" viewBox="0 0 15 15"><rect x="0.75" y="0.75" width="13.5" height="13.5" rx="3" fill="#fff" stroke="#5f5f5f" stroke-width="1.5"/></svg>
<svg class="ic" style="left:48.5px;top:87.66499999999996px" width="15" height="15" viewBox="0 0 15 15"><rect x="0.75" y="0.75" width="13.5" height="13.5" rx="3" fill="#fff" stroke="#5f5f5f" stroke-width="1.5"/></svg>
<svg class="ic" style="left:85.5px;top:87.66499999999996px" width="15" height="15" viewBox="0 0 15 15"><rect x="0" y="0" width="15" height="15" rx="3" fill="#1479ef"/><path d="M3.3 7.6L6.2 10.4L11.8 4.3" fill="none" stroke="#fff" stroke-width="2"/></svg>
<div class="t cl" style="left:116.5px;width:61.0px;top:87.8px;font-size:13.3px">51780</div>
<div class="t cl" style="left:182.5px;width:25.0px;top:87.8px;font-size:13.3px">НП</div>
<div class="t cl" style="left:212.5px;width:52.0px;top:87.8px;font-size:13.3px">30.06.21</div>
<div class="t cl" style="left:269.5px;width:53.0px;top:87.8px;font-size:13.3px">14:39:46</div>
<div class="t cl" style="left:442.5px;width:150.0px;top:87.8px;font-size:13.3px">Филиал ОАО <span style="position:relative;top:-2px">"Торг"</span></div>
<div class="t cl" style="left:597.5px;width:150.0px;top:87.8px;font-size:13.3px">Оптовый склад</div>
<div class="t cl" style="left:752.5px;width:150.0px;top:87.8px;font-size:13.3px">ООО "Торговый дом "Э.</div>
<div class="t cl" style="left:907.5px;width:150.0px;top:87.8px;font-size:13.3px">ОП ООО</div>
<div class="t cl" style="left:1062.5px;width:225.0px;top:87.8px;font-size:13.3px">Поступление на маг. ТД со СКЛАДА</div>
<div class="t cl" style="left:1292.5px;width:60.5px;top:87.8px;font-size:13.3px">Российский рубль</div>
<div class="t" style="left:581.5px;top:87.8px;width:11px;overflow:hidden;font-size:13.3px">г.Г</div>
<svg class="ic" style="left:10.5px;top:106.332px" width="15" height="15" viewBox="0 0 15 15"><rect x="0.75" y="0.75" width="13.5" height="13.5" rx="3" fill="#fff" stroke="#5f5f5f" stroke-width="1.5"/></svg>
<svg class="ic" style="left:48.5px;top:106.332px" width="15" height="15" viewBox="0 0 15 15"><rect x="0.75" y="0.75" width="13.5" height="13.5" rx="3" fill="#fff" stroke="#5f5f5f" stroke-width="1.5"/></svg>
<svg class="ic" style="left:85.5px;top:106.332px" width="15" height="15" viewBox="0 0 15 15"><rect x="0" y="0" width="15" height="15" rx="3" fill="#1479ef"/><path d="M3.3 7.6L6.2 10.4L11.8 4.3" fill="none" stroke="#fff" stroke-width="2"/></svg>
<div class="t cl" style="left:116.5px;width:61.0px;top:106.4px;font-size:13.3px">1853183</div>
<div class="t cl" style="left:182.5px;width:25.0px;top:106.4px;font-size:13.3px">ГМ</div>
<div class="t cl" style="left:212.5px;width:52.0px;top:106.4px;font-size:13.3px">29.06.21</div>
<div class="t cl" style="left:269.5px;width:53.0px;top:106.4px;font-size:13.3px">14:43:14</div>
<div class="t cl" style="left:327.5px;width:52.0px;top:106.4px;font-size:13.3px">29.06.21</div>
<div class="t cl" style="left:384.5px;width:53.0px;top:106.4px;font-size:13.3px">14:43:14</div>
<div class="t cl" style="left:442.5px;width:150.0px;top:106.4px;font-size:13.3px">ОАО <span style="position:relative;top:-1px">"Торг"</span></div>
<div class="t cl" style="left:597.5px;width:150.0px;top:106.4px;font-size:13.3px">Склад ОАО   <span style="position:relative;top:-2px">"Торг"</span></div>
<div class="t cl" style="left:752.5px;width:150.0px;top:106.4px;font-size:13.3px">Филиал ОАО<span style="position:relative;top:-2px">"Торг"</span></div>
<div class="t cl" style="left:907.5px;width:150.0px;top:106.4px;font-size:13.3px">Оптовый склад</div>
<div class="t cl" style="left:1062.5px;width:225.0px;top:106.4px;font-size:13.3px">Поступление на СКЛАД от поставщика</div>
<div class="t cl" style="left:1292.5px;width:60.5px;top:106.4px;font-size:13.3px">Российский рубль</div>
<div class="t" style="left:883.5px;top:106.4px;font-size:13.3px">"</div>
<div class="t" style="left:891.5px;top:106.4px;width:11px;overflow:hidden;font-size:13.3px">г.Г</div>
<svg class="ic" style="left:10.5px;top:124.99900000000002px" width="15" height="15" viewBox="0 0 15 15"><rect x="0.75" y="0.75" width="13.5" height="13.5" rx="3" fill="#fff" stroke="#5f5f5f" stroke-width="1.5"/></svg>
<svg class="ic" style="left:48.5px;top:124.99900000000002px" width="15" height="15" viewBox="0 0 15 15"><rect x="0.75" y="0.75" width="13.5" height="13.5" rx="3" fill="#fff" stroke="#5f5f5f" stroke-width="1.5"/></svg>
<svg class="ic" style="left:85.5px;top:124.99900000000002px" width="15" height="15" viewBox="0 0 15 15"><rect x="0" y="0" width="15" height="15" rx="3" fill="#1479ef"/><path d="M3.3 7.6L6.2 10.4L11.8 4.3" fill="none" stroke="#fff" stroke-width="2"/></svg>
</div>
<div class="a" style="left:262px;top:349.2px;width:1353px;height:3.0px;background:#f00;border-radius:2px"></div>
<div class="a" style="left:261px;top:391px;width:605px;height:10px;background:#dadada;border-bottom-left-radius:3px"></div>
<div class="a" style="left:1616px;top:362px;width:9px;height:16.5px;background:#dadada"></div>
<div class="a" style="left:260px;top:407px;width:28px;height:28px;background:#d4e4ea;border:1px solid #c5d5db;border-radius:5px"></div>
<div class="a" style="left:396px;top:407px;width:28px;height:28px;background:#d4e4ea;border:1px solid #c5d5db;border-radius:5px"></div>
<div class="vl" style="left:358.5px;top:407px;height:28px;background:#cdcdcd"></div>
<div class="vl" style="left:429.5px;top:407px;height:28px;background:#cdcdcd"></div>
<div class="vl" style="left:500.5px;top:407px;height:28px;background:#cdcdcd"></div>
<div class="vl" style="left:539.5px;top:407px;height:28px;background:#cdcdcd"></div>
<svg class="ic" style="left:822px;top:413.5px" width="15" height="15" viewBox="0 0 15 15"><rect x="0" y="0" width="15" height="15" rx="3" fill="#1479ef"/><path d="M3.3 7.6L6.2 10.4L11.8 4.3" fill="none" stroke="#fff" stroke-width="2"/></svg>
<div class="t " style="left:842px;top:414.6px;font-size:14.2px">Открыт (F6)</div>
<div class="a" style="left:926px;top:407px;width:191px;height:28px;background:#fff;border:1px solid #cfcfcf;border-radius:4px"></div>
<div class="t " style="left:933px;top:414.6px;">(Все)</div>
<svg class="ic" style="left:1097px;top:416.5px" width="14" height="10" viewBox="0 0 14 10"><path d="M1.5 2L7 7.5L12.5 2" fill="none" stroke="#111" stroke-width="2.2"/></svg>
<div class="a" style="left:1122px;top:407px;width:94px;height:28px;background:#fff;border:1px solid #cfcfcf;border-radius:5px"></div>
<div class="t" style="left:1122px;width:94px;text-align:center;top:414.3px;">Закрыть</div>
<div class="a" style="left:1221px;top:407px;width:124px;height:28px;background:#fff;border:1px solid #cfcfcf;border-radius:5px"></div>
<div class="t " style="left:1260.5px;top:414.3px;">Добавить</div>
<div class="a" style="left:1350px;top:407px;width:159px;height:28px;background:#fff;border:1px solid #cfcfcf;border-radius:5px"></div>
<div class="t " style="left:1389px;top:414.3px;">Редактировать</div>
<div class="a" style="left:1514px;top:407px;width:112px;height:28px;background:#fff;border:1px solid #cfcfcf;border-radius:5px"></div>
<div class="t " style="left:1553px;top:414.3px;">Удалить</div>
<svg class="ic" style="left:1243px;top:413px" width="16" height="16" viewBox="0 0 16 16"><path d="M8 1.5V14.5M1.5 8H14.5" stroke="#3c3c3c" stroke-width="2"/></svg>
<svg class="ic" style="left:1371px;top:412px" width="16" height="18" viewBox="0 0 16 18"><path d="M2.5 14L3.5 10.5L11.5 2.5L14 5L6 13L2.5 14Z" fill="none" stroke="#3c3c3c" stroke-width="1.5" stroke-linejoin="round"/><path d="M1 16.5H15" stroke="#5bc8f0" stroke-width="1.6"/></svg>
<svg class="ic" style="left:1535px;top:413px" width="16" height="16" viewBox="0 0 16 16"><path d="M1 8H15" stroke="#3c3c3c" stroke-width="2"/></svg>
<div class="hl" style="left:254px;top:441px;width:1378px;background:#c8c8c8"></div>
<div class="hl" style="left:254px;top:447px;width:1378px;background:#c8c8c8"></div>
<div class="a" style="left:263px;top:451px;width:130px;height:27px;background:#f2f2f2;border:1px solid #d2d2d2;border-bottom:none;border-radius:5px 5px 0 0"></div>
<div class="t" style="left:263.5px;width:129.0px;text-align:center;top:457.8px;">Спецификация</div>
<div class="a" style="left:397px;top:451px;width:119px;height:27px;background:#f2f2f2;border:1px solid #d2d2d2;border-bottom:none;border-radius:5px 5px 0 0"></div>
<div class="t" style="left:397.5px;width:118.0px;text-align:center;top:457.8px;">Сертификаты</div>
<div class="a" style="left:520px;top:451px;width:84px;height:27px;background:#f2f2f2;border:1px solid #d2d2d2;border-bottom:none;border-radius:5px 5px 0 0"></div>
<div class="t" style="left:520.5px;width:83.5px;text-align:center;top:457.8px;">История</div>
<div class="a" style="left:609px;top:451px;width:148px;height:27px;background:#f2f2f2;border:1px solid #d2d2d2;border-bottom:none;border-radius:5px 5px 0 0"></div>
<div class="t" style="left:609.5px;width:147.5px;text-align:center;top:457.8px;">Печатные формы</div>
<div class="a" style="left:761px;top:451px;width:92px;height:27px;background:#f2f2f2;border:1px solid #d2d2d2;border-bottom:none;border-radius:5px 5px 0 0"></div>
<div class="t" style="left:761.5px;width:91.0px;text-align:center;top:457.8px;">Действия</div>
<div class="a" style="left:857px;top:451px;width:81px;height:27px;background:#f2f2f2;border:1px solid #d2d2d2;border-bottom:none;border-radius:5px 5px 0 0"></div>
<div class="t" style="left:857.5px;width:80.5px;text-align:center;top:457.8px;">Импорт</div>
<div class="a" style="left:943px;top:451px;width:262px;height:27px;background:#f2f2f2;border:1px solid #d2d2d2;border-bottom:none;border-radius:5px 5px 0 0"></div>
<div class="t" style="left:943px;width:262px;text-align:center;top:457.8px;">Ошибки загрузки в оборудование</div>
<div class="a" style="left:1209px;top:451px;width:81px;height:27px;background:#d4e4ea;border:1px solid #d2d2d2;border-bottom:none;border-radius:5px 5px 0 0"></div>
<div class="t" style="left:1209.5px;width:80.5px;text-align:center;top:457.8px;">ГИС МТ</div>
<div class="a" style="left:255px;top:477px;width:1376px;height:297px;border:1px solid #c8c8c8;border-radius:5px"></div>
<div class="a" style="left:1206px;top:449px;width:89.5px;height:34.5px;border:3px solid #f00;border-radius:2.5px"></div>
<div class="a" style="left:259px;top:492px;width:1368px;height:279px;border:1px solid #d0d0d0;border-radius:4px"></div>
<div class="a" style="left:265px;top:490px;width:84px;height:5px;background:#f2f2f2"></div>
<div class="t g" style="left:268px;top:480.4px;">Документы</div>
<div class="a" style="left:264px;top:498px;width:1358px;height:235px;background:#fff;border:1px solid #c8c8c8;border-radius:4px"></div>
<div class="a" style="left:265px;top:499px;width:1356px;height:43px;background:#f2f2f2"></div>
<div class="a" style="left:265px;top:542px;width:1356px;height:27px;background:#d4e4ea"></div>
<div class="vl" style="left:517px;top:499.5px;height:70.0px;background:#e0e0e0"></div>
<div class="vl" style="left:948px;top:499.5px;height:70.0px;background:#e0e0e0"></div>
<div class="vl" style="left:986px;top:499.5px;height:70.0px;background:#e0e0e0"></div>
<div class="vl" style="left:1023px;top:499.5px;height:70.0px;background:#e0e0e0"></div>
<div class="vl" style="left:1239px;top:499.5px;height:70.0px;background:#e0e0e0"></div>
<div class="vl" style="left:1430px;top:499.5px;height:70.0px;background:#e0e0e0"></div>
<div class="t" style="left:264.5px;width:253.0px;text-align:center;top:513.8px;">Тип</div>
<div class="t" style="left:517.5px;width:431.0px;text-align:center;top:513.8px;">Код</div>
<div class="t cl" style="left:951.5px;width:32px;top:513.8px">Проведен</div>
<div class="t cl" style="left:989.5px;width:32px;top:513.8px">Отмечен</div>
<div class="t" style="left:1023.4px;width:216.19999999999993px;text-align:center;top:513.8px;">Статус передачи в ГИС МТ</div>
<div class="t" style="left:1239.6px;width:191.0px;text-align:center;top:513.8px;">Статус ГИС МТ</div>
<div class="t" style="left:1430.6px;width:190.4000000000001px;text-align:center;top:513.8px;">Описание ГИС МТ</div>
<div class="t " style="left:268.5px;top:547.5px;">Одежда</div>
<svg class="ic" style="left:960px;top:547.5px" width="15" height="15" viewBox="0 0 15 15"><rect x="0.75" y="0.75" width="13.5" height="13.5" rx="3" fill="#fff" stroke="#5f5f5f" stroke-width="1.5"/></svg>
<svg class="ic" style="left:998px;top:547.5px" width="15" height="15" viewBox="0 0 15 15"><rect x="0.75" y="0.75" width="13.5" height="13.5" rx="3" fill="#fff" stroke="#5f5f5f" stroke-width="1.5"/></svg>
<div class="t " style="left:1028.5px;top:547.5px;">Требуется загрузка</div>
<div class="a" style="left:264px;top:738px;width:27px;height:28px;background:#d4e4ea;border:1px solid #c5d5db;border-radius:5px"></div>
<div class="vl" style="left:329.5px;top:738px;height:28px;background:#cdcdcd"></div>
<div class="vl" style="left:400.5px;top:738px;height:28px;background:#cdcdcd"></div>
<div class="vl" style="left:471.5px;top:738px;height:28px;background:#cdcdcd"></div>
<div class="vl" style="left:510.5px;top:738px;height:28px;background:#cdcdcd"></div>
<div class="a" style="left:1242px;top:738px;width:180px;height:28px;background:#fff;border:1px solid #cfcfcf;border-radius:5px"></div>
<div class="t" style="left:1242px;width:180px;text-align:center;top:745.3px;">Отправить в ГИС МТ</div>
<div class="a" style="left:1427px;top:738px;width:195px;height:28px;background:#fff;border:1px solid #cfcfcf;border-radius:5px"></div>
<div class="t" style="left:1427px;width:195px;text-align:center;top:745.3px;">Заполнить типы марок</div>
<svg class="ic" style="left:0;top:0" width="1639" height="815"><path d="M968.8 649.5L1260 736.5" stroke="#f00" stroke-width="3.2" stroke-linecap="round"/><path d="M1272.3 739.6L1257 740L1259.6 731Z" fill="#f00" stroke="#f00" stroke-width="0.8" stroke-linejoin="round"/></svg>
<div class="t " style="left:257.3px;top:784.7px;font-size:15px">Включить корректировку на форме</div>
<div class="a" style="left:508px;top:778px;width:40px;height:28px;background:#fff;border:1px solid #cfcfcf;border-radius:4px"></div>
<svg class="ic" style="left:538px;top:796px" width="8" height="8"><path d="M8 0V5Q8 8 5 8H0Z" fill="#1b87c4"/></svg>
<svg class="ic" style="left:520px;top:784px" width="15" height="15" viewBox="0 0 15 15"><rect x="0.75" y="0.75" width="13.5" height="13.5" rx="3" fill="#fff" stroke="#5f5f5f" stroke-width="1.5"/></svg>
<div class="a" style="left:1106px;top:778px;width:58px;height:28px;background:#fff;border:1px solid #cfcfcf;border-radius:5px"></div>
<div class="t" style="left:1106px;width:58px;text-align:center;top:785.3px;"></div>
<div class="a" style="left:1169px;top:778px;width:130px;height:28px;background:#fff;border:1px solid #cfcfcf;border-radius:5px"></div>
<div class="t " style="left:1208px;top:785.3px;color:#8c8c8c;">Сохранить</div>
<div class="a" style="left:1304px;top:778px;width:124px;height:28px;background:#fff;border:1px solid #cfcfcf;border-radius:5px"></div>
<div class="t " style="left:1343px;top:785.3px;color:#8c8c8c;">Отменить</div>
<div class="a" style="left:1433px;top:778px;width:78px;height:28px;background:#fff;border:1px solid #cfcfcf;border-radius:5px"></div>
<div class="t " style="left:1472px;top:785.3px;">OK</div>
<div class="a" style="left:1516px;top:778px;width:114px;height:28px;background:#fff;border:1px solid #cfcfcf;border-radius:5px"></div>
<div class="t " style="left:1555px;top:785.3px;">Закрыть</div>
<svg class="ic" style="left:264px;top:411px" width="20" height="20" viewBox="0 0 20 20" fill="none"><rect x="0.7" y="1.5" width="4.2" height="4.2" rx="1.3" stroke="#55c0ec" stroke-width="1.3"/><rect x="0.7" y="8.1" width="4.2" height="4.2" rx="1.3" stroke="#55c0ec" stroke-width="1.3"/><rect x="0.7" y="14.4" width="4.2" height="4.2" rx="1.3" stroke="#55c0ec" stroke-width="1.3"/><path d="M8.3 4H19.3M8.3 10.4H19.3M8.3 16.7H19.3" stroke="#3a3a3a" stroke-width="1.8" stroke-linecap="round"/></svg>
<svg class="ic" style="left:296px;top:411px" width="20" height="20" viewBox="0 0 20 20" fill="none"><path d="M6.9 2V19M13 2V19M2 6.9H19M2 13H19" stroke="#55c0ec" stroke-width="1.7"/><rect x="1.3" y="1.3" width="17.5" height="17.3" rx="0.6" stroke="#222" stroke-width="2"/></svg>
<svg class="ic" style="left:329px;top:411px" width="20" height="20" viewBox="0 0 20 20" fill="none"><rect x="1.4" y="3.1" width="17.5" height="15.4" rx="2.2" stroke="#3a3a3a" stroke-width="2"/><path d="M1.5 6.8H18.8" stroke="#3a3a3a" stroke-width="1.6"/><path d="M5.5 0.4V3.2M14.4 0.4V3.2" stroke="#3a3a3a" stroke-width="1.5"/><path d="M3.1 12.8H16.8M6.8 9.5V16.5M13 9.5V16.5" stroke="#55c0ec" stroke-width="1.7"/></svg>
<svg class="ic" style="left:368px;top:411px" width="20" height="20" viewBox="0 0 20 20" fill="none"><path d="M0.8 2.9H19.3M5.6 13H14.1" stroke="#3a3a3a" stroke-width="1.8" stroke-linecap="round"/><path d="M3.1 8H17M8 18H12.1" stroke="#55c0ec" stroke-width="1.8" stroke-linecap="round"/></svg>
<svg class="ic" style="left:400px;top:411px" width="20" height="20" viewBox="0 0 20 20" fill="none"><path d="M7.06 3.84L7.52 0.91L12.28 0.91L12.74 3.84L13.64 4.36L16.41 3.29L18.79 7.42L16.48 9.28L16.48 10.32L18.79 12.18L16.41 16.31L13.64 15.24L12.74 15.76L12.28 18.69L7.52 18.69L7.06 15.76L6.16 15.24L3.39 16.31L1.01 12.18L3.32 10.32L3.32 9.28L1.01 7.42L3.39 3.29L6.16 4.36Z" stroke="#3a3a3a" stroke-width="1.7" stroke-linejoin="round"/><circle cx="9.9" cy="9.8" r="3" stroke="#55c0ec" stroke-width="1.7"/></svg>
<svg class="ic" style="left:440px;top:411px" width="20" height="20" viewBox="0 0 20 20" fill="none"><path d="M1.2 1.3L2.6 0.4V5M1.6 5H3.6" stroke="#55c0ec" stroke-width="1.1"/><path d="M0.6 7.3Q2 6 3.3 7Q4 8.2 0.6 12H3.9" stroke="#55c0ec" stroke-width="1.1"/><path d="M0.7 15.2H3.5L2 16.9Q3.9 17.3 3.6 18.7Q3 20.4 0.6 19.6" stroke="#55c0ec" stroke-width="1.1"/><path d="M7.2 3H18.4M7.2 10.5H18.4M7.2 18.1H18.4" stroke="#3a3a3a" stroke-width="1.8" stroke-linecap="round"/></svg>
<svg class="ic" style="left:471px;top:411px" width="20" height="20" viewBox="0 0 20 20" fill="none"><path d="M1.2 1.8H19.2M1.2 6.9H19.2M1.2 11.8H7.8M1.2 16.9H7.8" stroke="#3a3a3a" stroke-width="1.8" stroke-linecap="round"/><path d="M15.5 10V18.4M11.3 14.2H19.7" stroke="#55c0ec" stroke-width="1.7"/></svg>
<svg class="ic" style="left:510px;top:411px" width="20" height="20" viewBox="0 0 20 20" fill="none"><path d="M8.4 4.6H3.4Q0.7 4.6 0.7 7.3V15.8Q0.7 18.4 3.4 18.4H12.8Q15.5 18.4 15.5 15.8V11.5" stroke="#555" stroke-width="2" stroke-linecap="round"/><path d="M9.4 10.1L18.7 1.1M11.4 1.1H19V8.5" stroke="#55c0ec" stroke-width="1.9" stroke-linecap="round"/></svg>
<svg class="ic" style="left:549px;top:411px" width="20" height="20" viewBox="0 0 20 20" fill="none"><path d="M3.3 15.4H0.8V4.2H13.3M9.6 0.8L13.3 4.2L9.6 7.7" stroke="#222" stroke-width="1.9" stroke-linecap="round" stroke-linejoin="round"/><path d="M16.8 4.2H19.4V15.4H6.5M10 11.9L6.5 15.4L10 18.9" stroke="#55c0ec" stroke-width="1.9" stroke-linecap="round" stroke-linejoin="round"/></svg>
<svg class="ic" style="left:268px;top:742px" width="20" height="20" viewBox="0 0 20 20" fill="none"><rect x="0.7" y="1.5" width="4.2" height="4.2" rx="1.3" stroke="#55c0ec" stroke-width="1.3"/><rect x="0.7" y="8.1" width="4.2" height="4.2" rx="1.3" stroke="#55c0ec" stroke-width="1.3"/><rect x="0.7" y="14.4" width="4.2" height="4.2" rx="1.3" stroke="#55c0ec" stroke-width="1.3"/><path d="M8.3 4H19.3M8.3 10.4H19.3M8.3 16.7H19.3" stroke="#3a3a3a" stroke-width="1.8" stroke-linecap="round"/></svg>
<svg class="ic" style="left:300px;top:742px" width="20" height="20" viewBox="0 0 20 20" fill="none"><path d="M6.9 2V19M13 2V19M2 6.9H19M2 13H19" stroke="#55c0ec" stroke-width="1.7"/><rect x="1.3" y="1.3" width="17.5" height="17.3" rx="0.6" stroke="#222" stroke-width="2"/></svg>
<svg class="ic" style="left:339px;top:742px" width="20" height="20" viewBox="0 0 20 20" fill="none"><path d="M0.8 2.9H19.3M5.6 13H14.1" stroke="#3a3a3a" stroke-width="1.8" stroke-linecap="round"/><path d="M3.1 8H17M8 18H12.1" stroke="#55c0ec" stroke-width="1.8" stroke-linecap="round"/></svg>
<svg class="ic" style="left:371px;top:742px" width="20" height="20" viewBox="0 0 20 20" fill="none"><path d="M7.06 3.84L7.52 0.91L12.28 0.91L12.74 3.84L13.64 4.36L16.41 3.29L18.79 7.42L16.48 9.28L16.48 10.32L18.79 12.18L16.41 16.31L13.64 15.24L12.74 15.76L12.28 18.69L7.52 18.69L7.06 15.76L6.16 15.24L3.39 16.31L1.01 12.18L3.32 10.32L3.32 9.28L1.01 7.42L3.39 3.29L6.16 4.36Z" stroke="#3a3a3a" stroke-width="1.7" stroke-linejoin="round"/><circle cx="9.9" cy="9.8" r="3" stroke="#55c0ec" stroke-width="1.7"/></svg>
<svg class="ic" style="left:411px;top:742px" width="20" height="20" viewBox="0 0 20 20" fill="none"><path d="M1.2 1.3L2.6 0.4V5M1.6 5H3.6" stroke="#55c0ec" stroke-width="1.1"/><path d="M0.6 7.3Q2 6 3.3 7Q4 8.2 0.6 12H3.9" stroke="#55c0ec" stroke-width="1.1"/><path d="M0.7 15.2H3.5L2 16.9Q3.9 17.3 3.6 18.7Q3 20.4 0.6 19.6" stroke="#55c0ec" stroke-width="1.1"/><path d="M7.2 3H18.4M7.2 10.5H18.4M7.2 18.1H18.4" stroke="#3a3a3a" stroke-width="1.8" stroke-linecap="round"/></svg>
<svg class="ic" style="left:443px;top:742px" width="20" height="20" viewBox="0 0 20 20" fill="none"><path d="M1.2 1.8H19.2M1.2 6.9H19.2M1.2 11.8H7.8M1.2 16.9H7.8" stroke="#3a3a3a" stroke-width="1.8" stroke-linecap="round"/><path d="M15.5 10V18.4M11.3 14.2H19.7" stroke="#55c0ec" stroke-width="1.7"/></svg>
<svg class="ic" style="left:481px;top:742px" width="20" height="20" viewBox="0 0 20 20" fill="none"><path d="M8.4 4.6H3.4Q0.7 4.6 0.7 7.3V15.8Q0.7 18.4 3.4 18.4H12.8Q15.5 18.4 15.5 15.8V11.5" stroke="#555" stroke-width="2" stroke-linecap="round"/><path d="M9.4 10.1L18.7 1.1M11.4 1.1H19V8.5" stroke="#55c0ec" stroke-width="1.9" stroke-linecap="round"/></svg>
<svg class="ic" style="left:520px;top:742px" width="20" height="20" viewBox="0 0 20 20" fill="none"><path d="M3.3 15.4H0.8V4.2H13.3M9.6 0.8L13.3 4.2L9.6 7.7" stroke="#222" stroke-width="1.9" stroke-linecap="round" stroke-linejoin="round"/><path d="M16.8 4.2H19.4V15.4H6.5M10 11.9L6.5 15.4L10 18.9" stroke="#55c0ec" stroke-width="1.9" stroke-linecap="round" stroke-linejoin="round"/></svg>
<svg class="ic" style="left:1125px;top:782px" width="20" height="20" viewBox="0 0 20 20" fill="none"><path d="M2.7 7.3Q5 2.4 10 2.4Q12.8 2.4 14.2 4.6" stroke="#333" stroke-width="1.7"/><path d="M16.7 2V7.9H11.2Z" fill="#333"/><path d="M16.1 11.3Q14 16.1 9.5 16.1Q6.5 16.1 5 13.8" stroke="#55c0ec" stroke-width="1.8"/><path d="M2.4 11.3V16.7H7Z" fill="#55c0ec"/></svg>
<svg class="ic" style="left:1189px;top:783px" width="18" height="17" viewBox="0 0 18 17" fill="none"><path d="M3.3 9.4H13.8M2.7 10.5V13.6M14.4 10.5V13.6" stroke="#a8a8a8" stroke-width="1.4"/><path d="M3.5 1.9H12.4L15.3 4.9V13.3Q15.3 15.1 13.5 15.1H3.5Q1.7 15.1 1.7 13.3V3.7Q1.7 1.9 3.5 1.9Z" stroke="#2a2a2a" stroke-width="1.8"/></svg>
<svg class="ic" style="left:1324px;top:783px" width="18" height="17" viewBox="0 0 18 17" fill="none"><path d="M1.3 4.2H15.9" stroke="#c4c4c4" stroke-width="1.7"/><path d="M6.4 3.8V1.5H10.7V3.8" stroke="#c4c4c4" stroke-width="1.7"/><path d="M3.7 6.3V14.2Q3.7 15.4 4.9 15.4H12.3Q13.5 15.4 13.5 14.2V6.3" stroke="#444" stroke-width="1.9"/></svg>
<svg class="ic" style="left:1453px;top:784px" width="18" height="16" viewBox="0 0 18 16" fill="none"><path d="M1.6 10L5.8 13.2L15.4 1.8" stroke="#444" stroke-width="1.7" stroke-linecap="round" stroke-linejoin="round"/></svg>
<svg class="ic" style="left:1537px;top:785px" width="14" height="14" viewBox="0 0 14 14" fill="none"><path d="M1.8 1.2L12.8 12.2M12.8 1.2L1.8 12.2" stroke="#444" stroke-width="1.8" stroke-linecap="round"/></svg>
</body></html>
